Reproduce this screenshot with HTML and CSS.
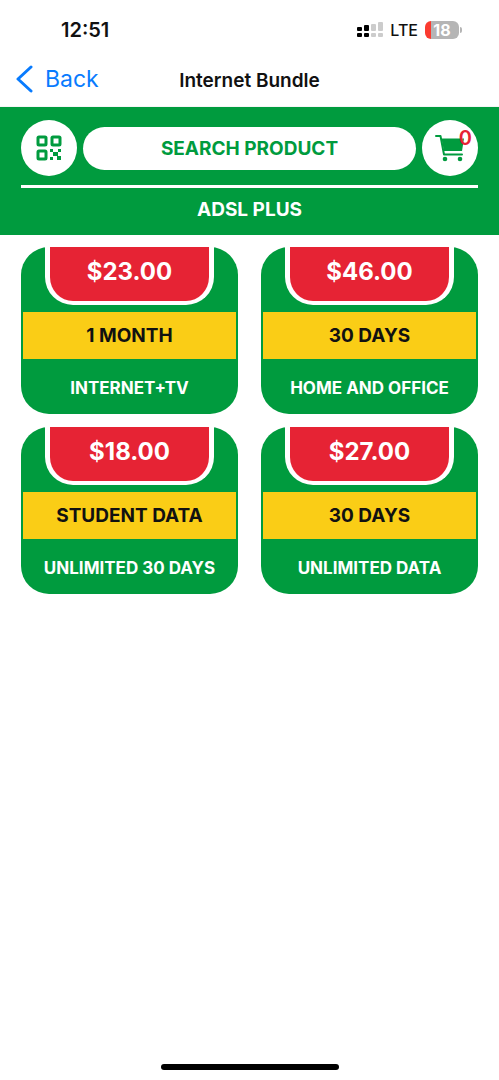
FILE: index.html
```html
<!DOCTYPE html>
<html lang="en">
<head>
<meta charset="utf-8">
<meta name="viewport" content="width=device-width, initial-scale=1">
<title>Internet Bundle</title>
<link rel="stylesheet" href="styles.css">
</head>
<body>
<div class="screen">
  <div class="status">
    <span class="clock">12:51</span>
    <div class="status-right">
      <svg class="signal" width="26" height="16" viewBox="0 0 26 16" aria-hidden="true">
        <g fill="#000"><rect x="0" y="5" width="5" height="4" rx="1"/><rect x="7" y="3" width="5" height="6" rx="1"/><rect x="0" y="11" width="5" height="4" rx="1"/><rect x="7" y="11" width="5" height="4" rx="1"/></g>
        <g fill="#ccc"><rect x="14" y="2" width="5" height="7" rx="1"/><rect x="21" y="0" width="5" height="9" rx="1"/><rect x="14" y="11" width="5" height="4" rx="1"/><rect x="21" y="11" width="5" height="4" rx="1"/></g>
      </svg>
      <span class="network">LTE</span>
      <div class="battery"><span class="battery-level">18</span><span class="battery-tip"></span></div>
    </div>
  </div>
  <nav class="navbar">
    <a class="back" href="#">
      <svg width="17" height="28" viewBox="0 0 17 28" fill="none" stroke="#087bfe" stroke-width="3" stroke-linecap="round" stroke-linejoin="round" aria-hidden="true"><path d="M15 2 2 14l13 12"/></svg>
      <span>Back</span>
    </a>
    <h1 class="title">Internet Bundle</h1>
  </nav>
  <header class="header">
    <div class="tools">
      <button class="round" type="button" aria-label="Scan code">
        <svg width="26" height="26" viewBox="0 0 26 26" aria-hidden="true">
          <g fill="none" stroke="#009b3e" stroke-width="3"><rect x="2" y="2" width="8" height="8" rx="1"/><rect x="16" y="2" width="8" height="8" rx="1"/><rect x="2" y="16" width="8" height="8" rx="1"/></g>
          <path fill="#009b3e" d="M14 14h3v3h-3zM22 14h3v3h-3zM17 17h5v4h-5zM14 22h3v3h-3zM21 21h4v4h-4z"/>
        </svg>
      </button>
      <input class="search" type="text" placeholder="SEARCH PRODUCT" aria-label="Search product">
      <button class="round" type="button" aria-label="Cart, 0 items">
        <svg width="30" height="28" viewBox="0 0 30 28" aria-hidden="true">
          <path d="M1 2h4.500L9 20.500h18" fill="none" stroke="#009b3e" stroke-width="2" stroke-linecap="round" stroke-linejoin="round"/>
          <path d="M6.500 4.500H29L27 17H9z" fill="#009b3e"/>
          <circle cx="10" cy="25" r="2.300" fill="#009b3e"/><circle cx="25" cy="25" r="2.300" fill="#009b3e"/>
        </svg>
        <span class="count">0</span>
      </button>
    </div>
    <h2 class="category">ADSL PLUS</h2>
  </header>
  <main class="products">
    <button class="card" type="button"><span class="price">$23.00</span><span class="term">1 MONTH</span><span class="name">INTERNET+TV</span></button>
    <button class="card" type="button"><span class="price">$46.00</span><span class="term">30 DAYS</span><span class="name">HOME AND OFFICE</span></button>
    <button class="card" type="button"><span class="price">$18.00</span><span class="term">STUDENT DATA</span><span class="name">UNLIMITED 30 DAYS</span></button>
    <button class="card" type="button"><span class="price">$27.00</span><span class="term">30 DAYS</span><span class="name">UNLIMITED DATA</span></button>
  </main>
  <div class="home"></div>
</div>
</body>
</html>
```
FILE: styles.css
```css
* { box-sizing: border-box; }
body { margin: 0; background: #fff; color: #111; font-family: Inter, "Liberation Sans", sans-serif; }
button, input { font: inherit; border: 0; padding: 0; }
.screen { min-height: 100vh; display: flex; flex-direction: column; }

.status { display: flex; justify-content: space-between; align-items: center; height: 60px; padding: 0 40px 0 61px; }
.clock { font-size: 20px; font-weight: 600; }
.status-right { display: flex; align-items: center; gap: 7px; }
.network { font-size: 16px; font-weight: 500; }
.battery { position: relative; width: 34px; height: 18px; border-radius: 6px; background: linear-gradient(to right, #fb3b30 6px, #b5b5b5 6px); color: #fff; font-size: 16px; font-weight: 700; line-height: 18px; text-align: center; }
.battery-level { display: block; }
.battery-tip { position: absolute; right: -3px; top: 6px; width: 2px; height: 6px; border-radius: 0 2px 2px 0; background: #b5b5b5; }

.navbar { display: grid; grid-template-columns: 1fr auto 1fr; align-items: center; height: 47px; padding: 0 16px 6px; border-bottom: 1px solid #f5f5f5; }
.back { display: flex; align-items: center; gap: 12px; color: #087bfe; font-size: 23px; text-decoration: none; padding-bottom: 2px; }
.title { margin: 0; padding-top: 1px; font-size: 19px; font-weight: 600; line-height: 24px; }

.header { background: #009b3e; padding: 13px 21px 11px; }
.tools { display: flex; align-items: center; gap: 6px; padding-bottom: 9px; border-bottom: 3px solid #fff; }
.round { position: relative; flex: none; display: flex; align-items: center; justify-content: center; width: 56px; height: 56px; border-radius: 50%; background: #fff; }
.count { position: absolute; top: 6px; right: 6px; color: #e62334; font-size: 20px; font-weight: 600; line-height: 24px; }
.search { flex: 1; min-width: 0; height: 43px; border-radius: 22px; background: #fff; color: #009b3e; text-align: center; font-size: 19px; font-weight: 700; }
.search::placeholder { color: #009b3e; opacity: 1; }
.category { margin: 8px 0 0; color: #fff; font-size: 19px; font-weight: 700; line-height: 28px; text-align: center; }

.products { display: grid; grid-template-columns: 1fr 1fr; gap: 13px 23px; padding: 12px 21px; }
.card { display: flex; flex-direction: column; align-items: center; height: 167px; padding: 0 2px; border-radius: 28px; background: #009b3e; color: #fff; font-weight: 700; }
.price { width: 79%; height: 58px; border: solid #fff; border-width: 0 5px 4px; border-radius: 0 0 28px 28px; background: #e62334; font-size: 24px; line-height: 49px; }
.term { width: 100%; margin-top: 7px; background: #facd16; color: #111; font-size: 19px; line-height: 47px; }
.name { font-size: 17px; line-height: 24px; margin-top: 17px; white-space: nowrap; }

.home { width: 178px; height: 6px; margin: auto auto 10px; border-radius: 3px; background: #000; }
```
